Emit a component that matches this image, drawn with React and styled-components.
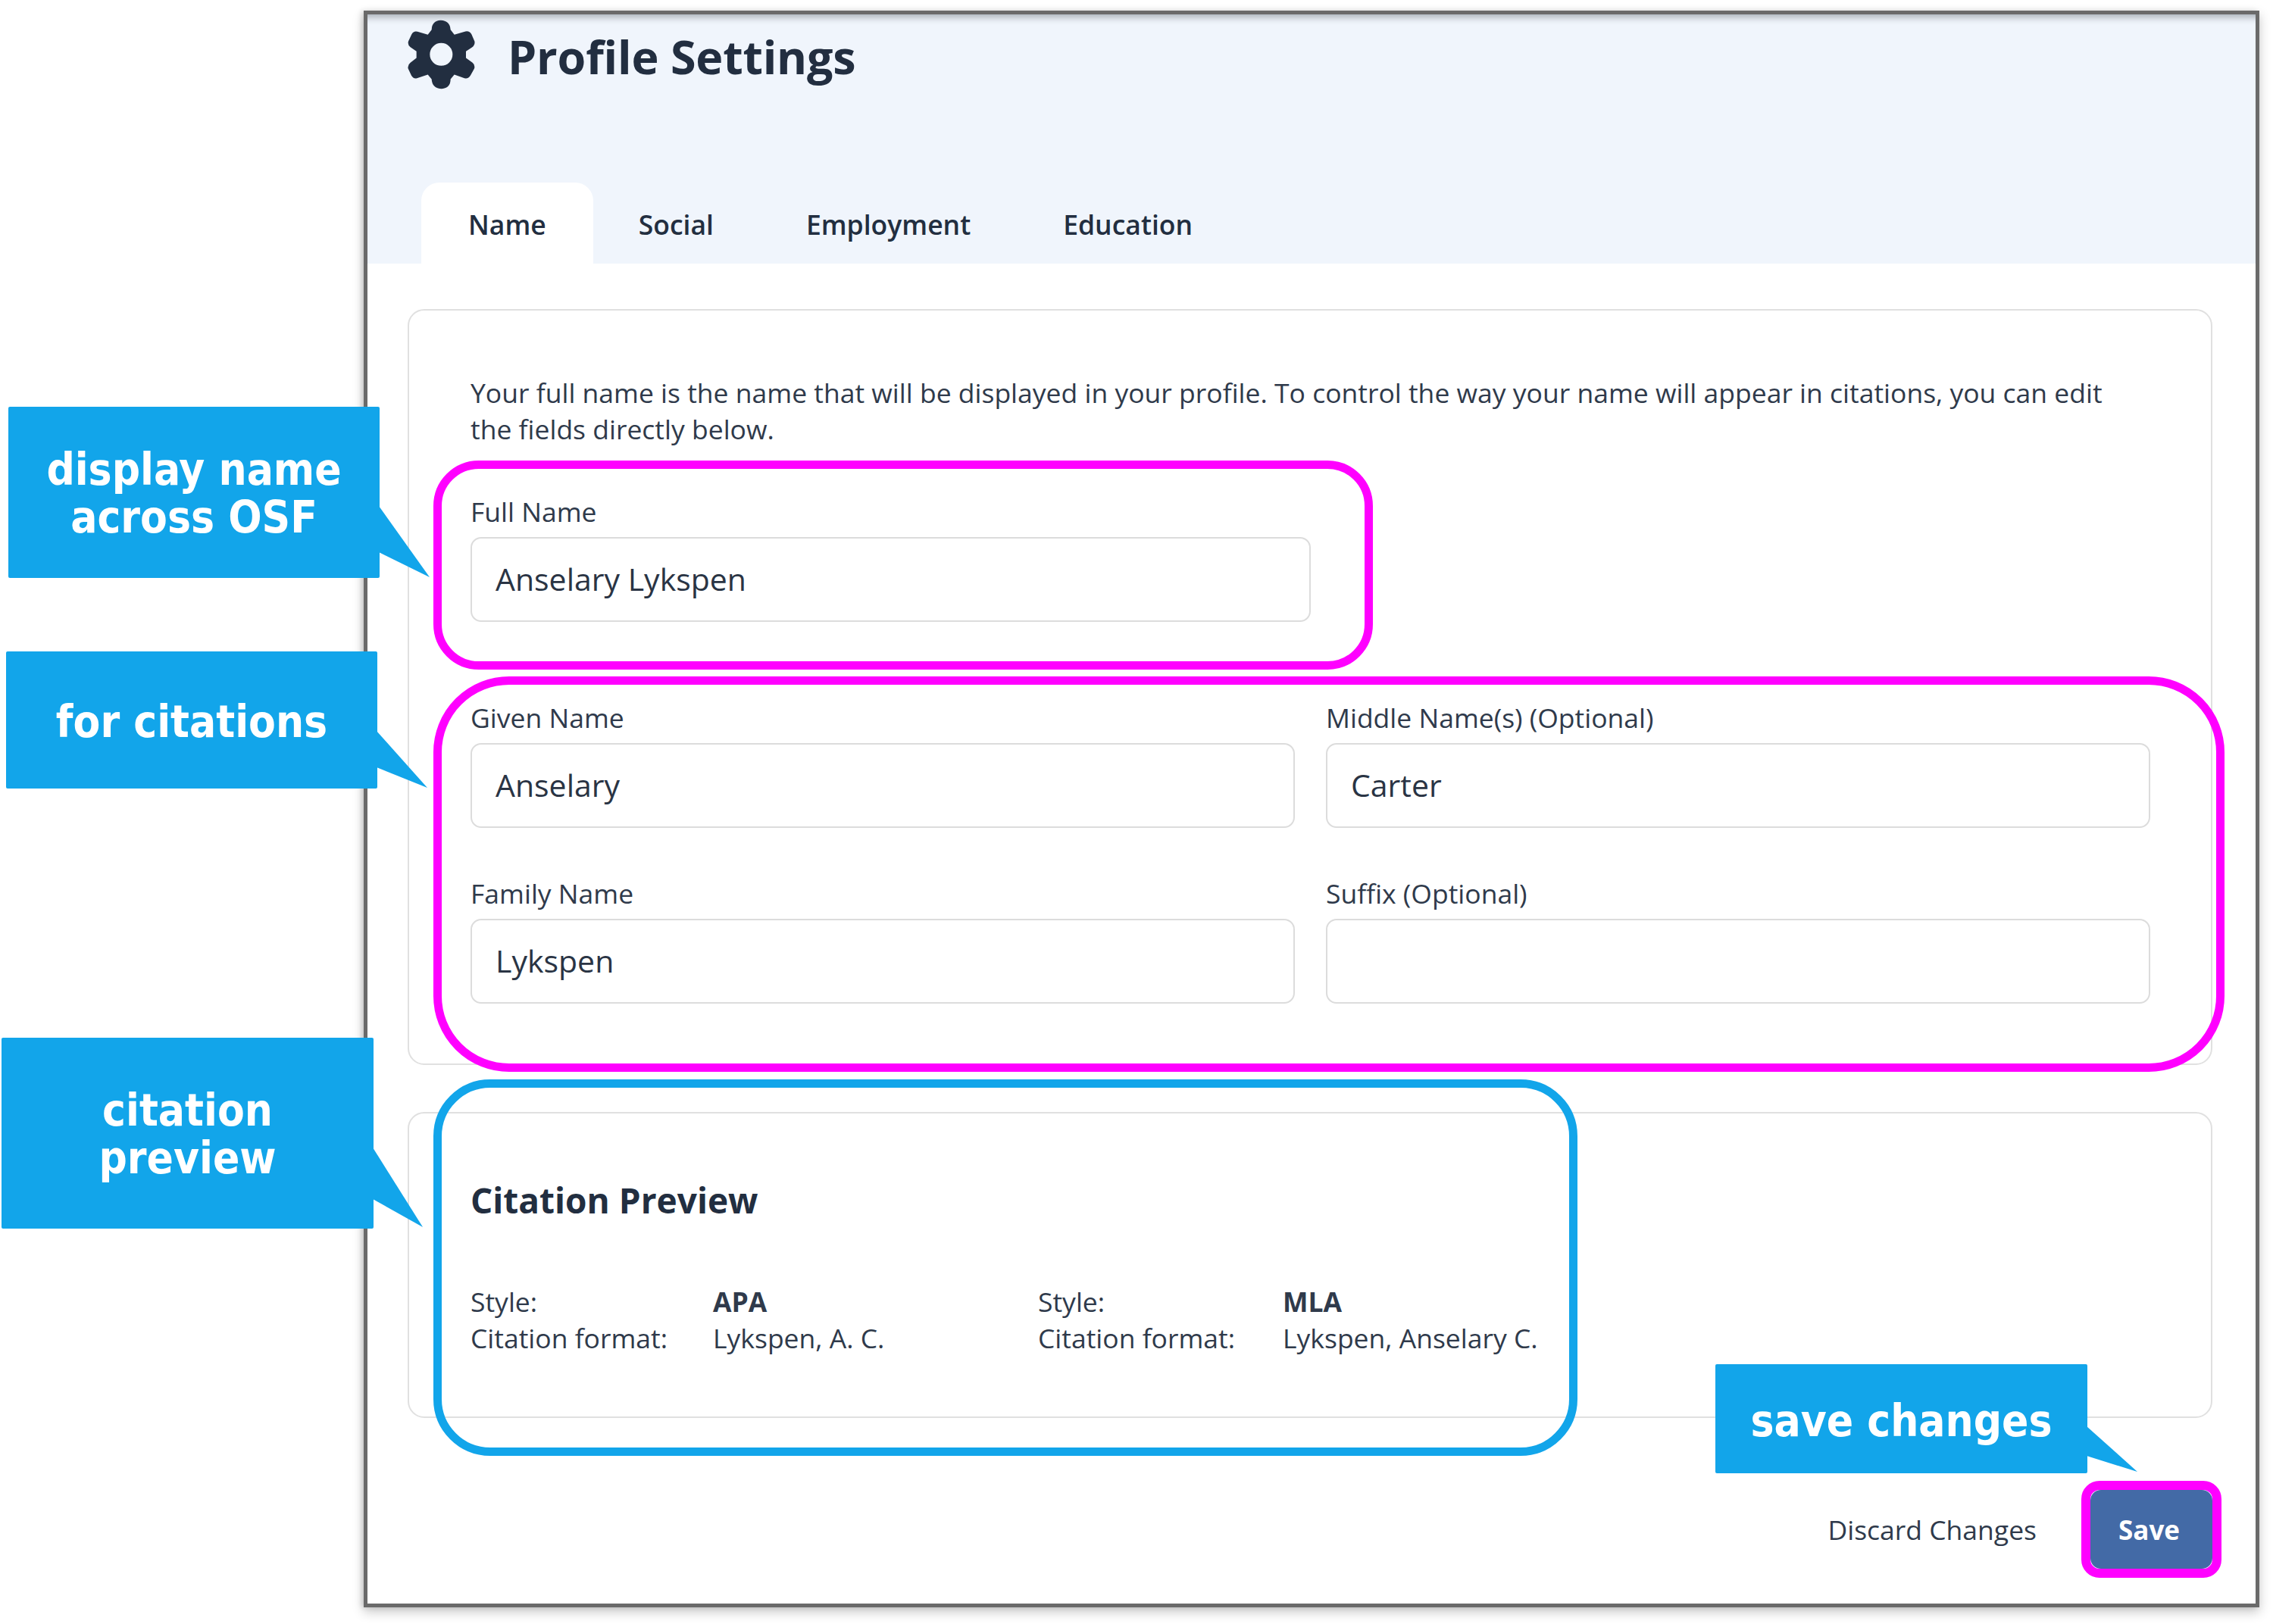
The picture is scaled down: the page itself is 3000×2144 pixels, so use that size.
import React from "react";
import styled, { createGlobalStyle } from "styled-components";

const Global = createGlobalStyle`
  html, body { margin: 0; padding: 0; background: #fff; }
  body { font-family: "Open Sans", "Noto Sans", sans-serif; color: #222e40; }
`;

const Canvas = styled.div`
  position: relative;
  width: 3000px;
  height: 2144px;
  padding: 14px 0 0 480px;
  box-sizing: border-box;
  overflow: hidden;
`;

const Window = styled.main`
  width: 2502px;
  height: 2108px;
  box-sizing: border-box;
  border: 5px solid #6a6a6a;
  background: #fff;
  box-shadow: 0 6px 14px rgba(0, 0, 0, 0.22), -3px 0 6px rgba(0, 0, 0, 0.12);
`;

const Header = styled.header`
  height: 329px;
  box-sizing: border-box;
  background: #f0f5fc;
  box-shadow: inset 0 12px 10px -8px rgba(60, 70, 80, 0.4);
  padding: 7px 0 0 53px;
  display: flex;
  flex-direction: column;
  justify-content: space-between;
`;

const TitleRow = styled.div`
  display: flex;
  align-items: center;
  gap: 43px;
`;

const GearSvg = styled.svg`
  width: 89px;
  height: 92px;
  fill: #222e40;
  flex: none;
`;

const Title = styled.h1`
  margin: 0;
  font-size: 61px;
  line-height: 80px;
  font-weight: 700;
  letter-spacing: -0.2px;
  position: relative;
  top: 3px;
`;

const Tabs = styled.nav`
  display: flex;
  margin-left: 18px;
  height: 107px;
`;

const Tab = styled.div`
  box-sizing: border-box;
  height: 107px;
  padding: 31px ${(p) => p.$pr}px 0 ${(p) => p.$pl}px;
  font-size: 35.5px;
  line-height: 48px;
  font-weight: 600;
  border-radius: 24px 24px 0 0;
  background: ${(p) => (p.$active ? "#fff" : "transparent")};
`;

const Body = styled.div`
  padding: 60px 57px 0 53px;
`;

const Card = styled.section`
  box-sizing: border-box;
  height: ${(p) => p.$h}px;
  border: 2px solid #e0e0e0;
  border-radius: 22px;
  padding: 84px 0 0 81px;
  margin-bottom: 62px;
`;

const Intro = styled.p`
  margin: 0 0 61px;
  width: 2200px;
  font-size: 35.5px;
  line-height: 48px;
  color: #2f3a4b;
`;

const FullName = styled.div`
  width: 1109px;
  margin-bottom: 102px;
`;

const NameGrid = styled.div`
  display: grid;
  grid-template-columns: 1088px 1088px;
  column-gap: 41px;
  row-gap: 62px;
`;

const Label = styled.div`
  font-size: 35.5px;
  line-height: 48px;
  margin-bottom: 10px;
  color: #2f3a4b;
`;

const Input = styled.div`
  box-sizing: border-box;
  height: 112px;
  border: 2px solid #dcdcdc;
  border-radius: 14px;
  padding: 0 31px;
  font-size: 41px;
  line-height: 106px;
  color: #2a3444;
`;

const CardHeading = styled.h2`
  margin: 0 0 80px;
  font-size: 46px;
  line-height: 60px;
  font-weight: 700;
`;

const Citations = styled.dl`
  margin: 0;
  display: grid;
  grid-template-columns: 320px 429px 323px 400px;
  font-size: 35.5px;
  line-height: 48px;
  color: #2f3a4b;
`;

const Term = styled.span``;

const Value = styled.span`
  font-weight: ${(p) => (p.$bold ? 700 : 400)};
`;

const Footer = styled.footer`
  display: flex;
  justify-content: flex-end;
  align-items: center;
  gap: 71px;
  margin-top: 95px;
`;

const Discard = styled.div`
  font-size: 35.5px;
  line-height: 48px;
  color: #2f3a4b;
`;

const Save = styled.button`
  width: 161px;
  height: 104px;
  border: 0;
  border-radius: 14px;
  padding: 0 6px 0 0;
  background: #436aa6;
  color: #fff;
  font-family: inherit;
  font-size: 35px;
  font-weight: 700;
`;

const Highlight = styled.div`
  position: absolute;
  box-sizing: border-box;
  left: ${(p) => p.$x}px;
  top: ${(p) => p.$y}px;
  width: ${(p) => p.$w}px;
  height: ${(p) => p.$h}px;
  border: ${(p) => p.$t}px solid ${(p) => p.$color};
  border-radius: ${(p) => p.$r}px;
  pointer-events: none;
`;

const Callout = styled.div`
  position: absolute;
  box-sizing: border-box;
  left: ${(p) => p.$x}px;
  top: ${(p) => p.$y}px;
  width: ${(p) => p.$w}px;
  height: ${(p) => p.$h}px;
  background: #12a5ea;
  border-radius: 2px;
  padding-top: ${(p) => p.$pt}px;
  color: #fff;
  font-family: "DejaVu Sans Condensed", "DejaVu Sans", sans-serif;
  font-stretch: condensed;
  font-weight: 700;
  font-size: 58px;
  line-height: 63px;
  text-align: center;
`;

const Tail = styled.svg`
  position: absolute;
  left: 100%;
  top: 0;
  overflow: visible;
  fill: #12a5ea;
`;

const Gear = () => (
  <GearSvg viewBox="55 33 267 275" aria-hidden="true">
    <path
      fillRule="evenodd"
      d="M150 72 Q151 37 186 35 Q222 36 225 72 L240 92 L284 79 Q300 76 308 90 L320 118 Q323 132 310 142 L286 158 L286 184 L312 203 Q323 212 319 226 L304 253 Q295 268 280 264 L240 250 L225 268 Q225 303 190 306 Q152 305 150 268 L135 250 L92 264 Q78 268 70 254 L57 226 Q54 212 66 203 L90 184 L90 158 L66 141 Q54 132 58 118 L71 90 Q79 76 94 80 L135 92 Z M188 125 A45 45 0 1 0 188 215 A45 45 0 1 0 188 125 Z"
    />
  </GearSvg>
);

const callouts = [
  { x: 11, y: 537, w: 490, h: 226, pt: 52, lines: ["display name", "across OSF"], tail: { n1: 131, n2: 192, tx: 66, ty: 225 } },
  { x: 8, y: 860, w: 490, h: 181, pt: 62, lines: ["for citations"], tail: { n1: 105, n2: 153, tx: 66, ty: 180 } },
  { x: 2, y: 1370, w: 491, h: 252, pt: 65, lines: ["citation", "preview"], tail: { n1: 145, n2: 213, tx: 65, ty: 250 } },
  { x: 2264, y: 1801, w: 491, h: 144, pt: 44, lines: ["save changes"], tail: { n1: 82, n2: 121, tx: 66, ty: 142 } },
];

const Row = ({ cells }) =>
  cells.map(([t, v, b]) => (
    <React.Fragment key={t + v}>
      <Term>{t}</Term>
      <Value $bold={b}>{v}</Value>
    </React.Fragment>
  ));

const Field = ({ label, value }) => (
  <div>
    <Label>{label}</Label>
    <Input>{value}</Input>
  </div>
);

export default function App() {
  return (
    <Canvas>
      <Global />
      <Window>
        <Header>
          <TitleRow>
            <Gear />
            <Title>Profile Settings</Title>
          </TitleRow>
          <Tabs>
            <Tab $active $pl={62} $pr={62}>Name</Tab>
            <Tab $pl={60} $pr={61}>Social</Tab>
            <Tab $pl={61} $pr={61}>Employment</Tab>
            <Tab $pl={61} $pr={61}>Education</Tab>
          </Tabs>
        </Header>
        <Body>
          <Card $h={998}>
            <Intro>
              Your full name is the name that will be displayed in your profile. To control the way your name will appear in citations, you can edit the fields directly below.
            </Intro>
            <FullName>
              <Field label="Full Name" value="Anselary Lykspen" />
            </FullName>
            <NameGrid>
              <Field label="Given Name" value="Anselary" />
              <Field label="Middle Name(s) (Optional)" value="Carter" />
              <Field label="Family Name" value="Lykspen" />
              <Field label="Suffix (Optional)" value="" />
            </NameGrid>
          </Card>
          <Card $h={404}>
            <CardHeading>Citation Preview</CardHeading>
            <Citations>
              <Row cells={[["Style:", "APA", true], ["Style:", "MLA", true]]} />
              <Row cells={[["Citation format:", "Lykspen, A. C."], ["Citation format:", "Lykspen, Anselary C."]]} />
            </Citations>
          </Card>
          <Footer>
            <Discard>Discard Changes</Discard>
            <Save>Save</Save>
          </Footer>
        </Body>
      </Window>

      <Highlight $x={572} $y={608} $w={1240} $h={276} $t={11} $r={60} $color="#ff00ff" />
      <Highlight $x={572} $y={893} $w={2364} $h={522} $t={11} $r={100} $color="#ff00ff" />
      <Highlight $x={572} $y={1425} $w={1510} $h={497} $t={11} $r={75} $color="#12a5ea" />
      <Highlight $x={2747} $y={1955} $w={185} $h={128} $t={12} $r={24} $color="#ff00ff" />

      {callouts.map((c) => (
        <Callout key={c.lines[0]} $x={c.x} $y={c.y} $w={c.w} $h={c.h} $pt={c.pt}>
          {c.lines.map((l) => (
            <div key={l}>{l}</div>
          ))}
          <Tail width={c.tail.tx} height={c.h}>
            <polygon points={`-1,${c.tail.n1} ${c.tail.tx},${c.tail.ty} -1,${c.tail.n2}`} />
          </Tail>
        </Callout>
      ))}
    </Canvas>
  );
}
